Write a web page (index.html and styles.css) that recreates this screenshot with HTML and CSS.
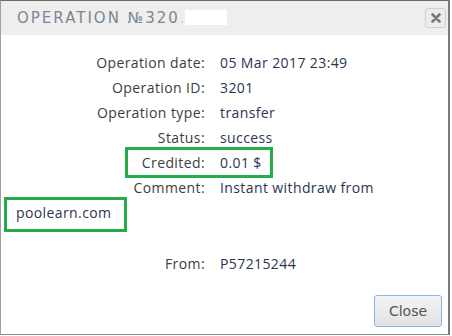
FILE: index.html
```html
<!DOCTYPE html>
<html lang="en">
<head>
    <meta charset="UTF-8">
    <title>Operation</title>
    <link rel="stylesheet" href="styles.css">
</head>
<body>
    <div class="dialog">
        <div class="dialog-header">
            <span class="dialog-title">Operation №320<span class="dots">..</span><span class="hidden-part"></span></span>
            <button class="btn-x" type="button" aria-label="close">
                <svg width="10" height="10" viewBox="0 0 10 10"><path d="M1.5 1.5 L8.5 8.5 M8.5 1.5 L1.5 8.5" stroke="#7a7a7a" stroke-width="2.6" stroke-linecap="round"/></svg>
            </button>
        </div>
        <div class="dialog-body">
            <dl class="details">
                <dt>Operation date:</dt>
                <dd>05 Mar 2017 23:49</dd>
                <dt>Operation ID:</dt>
                <dd>3201</dd>
                <dt>Operation type:</dt>
                <dd>transfer</dd>
                <dt>Status:</dt>
                <dd>success</dd>
                <dt class="mark">Credited:</dt>
                <dd>0.01 $</dd>
                <dt>Comment:</dt>
                <dd class="comment">Instant withdraw from <span class="mark-inline">poolearn.com</span></dd>
                <dt>From:</dt>
                <dd>P57215244</dd>
            </dl>
        </div>
        <div class="dialog-footer">
            <button class="btn-close" type="button">Close</button>
        </div>
    </div>
</body>
</html>
```

FILE: styles.css
```css
body {
    margin: 0;
    font-family: "Open Sans", Arial, sans-serif;
    background: #fff;
}
.dialog {
    width: 450px;
    height: 335px;
    border-left: 1px solid #a0a0a0;
    border-right: 2px solid #7a7a7a;
    border-top: 1px solid #6a6a6a;
    border-bottom: 1px solid #888;
    display: flex;
    flex-direction: column;
    box-sizing: border-box;
}
.dialog-header {
    height: 34px;
    background: #eeeeee;
    display: flex;
    align-items: center;
    justify-content: space-between;
    padding: 0 2px 0 16px;
}
.dialog-title {
    font-family: "DejaVu Sans", sans-serif;
    font-size: 15px;
    text-transform: uppercase;
    letter-spacing: 2px;
    color: #7c8794;
}
.dots {
    color: #c9ccd1;
}
.hidden-part {
    display: inline-block;
    width: 42px;
    height: 15px;
    background: #fff;
    vertical-align: -2px;
    margin-left: -8px;
}
.btn-x {
    width: 21px;
    height: 20px;
    padding: 0;
    border: 1px solid #cfcfcf;
    border-radius: 3px;
    background: #ececec;
    display: flex;
    align-items: center;
    justify-content: center;
    cursor: pointer;
}
.dialog-body {
    flex: 1;
    padding: 15px 15px 0 15px;
}
.details {
    margin: 0;
    font-size: 14px;
    line-height: 25px;
    letter-spacing: 0.4px;
}
.details dt {
    float: left;
    clear: left;
    width: 189px;
    padding-right: 15px;
    text-align: right;
    color: #3d3d3d;
}
.details dd {
    margin: 0;
    color: #2b3453;
}
.details dd.comment {
    margin-bottom: 26px;
}
.mark {
    position: relative;
}
.mark::before {
    content: "";
    position: absolute;
    left: 109px;
    right: -53px;
    top: -3px;
    bottom: -3px;
    border: 3px solid #22ad4a;
}
.mark-inline {
    position: relative;
}
.mark-inline::before {
    content: "";
    position: absolute;
    left: -12px;
    right: -16px;
    top: -6px;
    bottom: -10px;
    border: 3px solid #22ad4a;
}
.dialog-footer {
    display: flex;
    justify-content: flex-end;
    padding: 0 6px 7px 0;
}
.btn-close {
    width: 68px;
    height: 32px;
    font-family: "DejaVu Sans", sans-serif;
    font-size: 14px;
    color: #555;
    border: 1px solid #8db2f0;
    border-radius: 3px;
    background: linear-gradient(#f4f4f4, #e2e2e2);
    cursor: pointer;
}
```
